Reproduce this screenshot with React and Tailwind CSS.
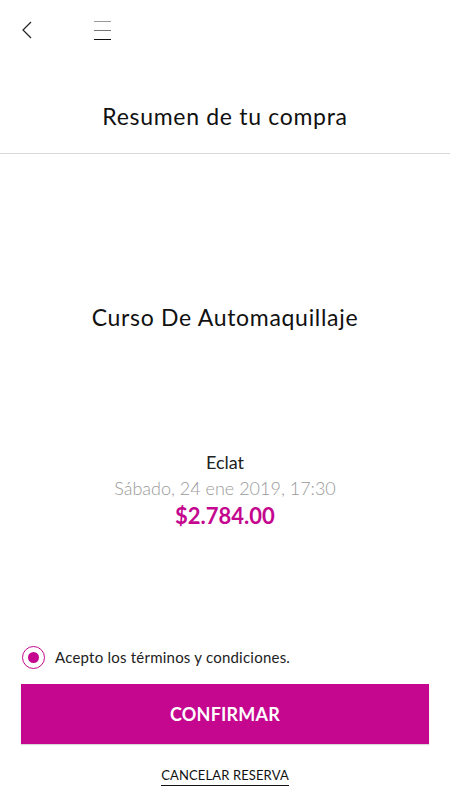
import React, { useState } from 'react';

const App = () => {
  const [accepted, setAccepted] = useState(true);

  return (
    <div className="w-[450px] h-[800px] bg-white flex flex-col font-['Lato',sans-serif] text-[#111]">
      {/* Header */}
      <header className="border-b border-[#d9d9d9] h-[154px] flex flex-col">
        <div className="flex items-center pt-5 pl-5 gap-[62px] h-[40px]">
          <button className="w-[12px] h-[18px] flex items-center justify-center">
            <svg width="11" height="18" viewBox="0 0 11 18" fill="none">
              <path d="M10 1L2 9l8 8" stroke="#222" strokeWidth="1.2" />
            </svg>
          </button>
          <button className="w-[17px] h-[19px] flex flex-col justify-between">
            <span className="block h-px w-full bg-[#9a9a9a]" />
            <span className="block h-px w-full bg-[#777]" />
            <span className="block h-px w-full bg-[#111]" />
          </button>
        </div>
        <h1 className="mt-[62px] text-center text-[23px] leading-[28px] tracking-[0.03em] text-[#111]">Resumen de tu compra</h1>
      </header>

      {/* Content */}
      <main className="flex-1 flex flex-col items-center">
        <h2 className="mt-[149px] text-[23px] leading-[28px] tracking-[0.03em] text-[#111]">Curso De Automaquillaje</h2>
        <div className="mt-[118px] flex flex-col items-center">
          <p className="text-[18px] leading-[26px] text-[#222]">Eclat</p>
          <p className="text-[18px] leading-[26px] text-[#9a9a9a] font-light">Sábado, 24 ene 2019, 17:30</p>
          <p className="text-[22px] leading-[30px] font-bold text-[#c5078f]">$2.784.00</p>
        </div>
      </main>

      {/* Footer */}
      <footer className="px-[21px] pb-[14px] flex flex-col">
        <label className="flex items-center gap-[10px] pl-[1px] cursor-pointer" onClick={() => setAccepted(!accepted)}>
          <span className="w-[23px] h-[23px] rounded-full border border-[#c5078f] flex items-center justify-center">
            {accepted && <span className="w-[11px] h-[11px] rounded-full bg-[#c5078f]" />}
          </span>
          <span className="text-[15px] tracking-[0.015em] text-[#222]">Acepto los términos y condiciones.</span>
        </label>
        <button className="mt-[15px] h-[60px] w-full bg-[#c5078f] text-white text-[18px] font-bold tracking-[0.01em] shadow-[0_1px_1px_rgba(0,0,0,0.15)]">
          CONFIRMAR
        </button>
        <div className="mt-[23px] flex justify-center">
          <button className="text-[13px] leading-[16px] text-[#111] border-b border-[#111] pb-[2px] tracking-[0.01em]">
            CANCELAR RESERVA
          </button>
        </div>
      </footer>
    </div>
  );
};

export default App;
